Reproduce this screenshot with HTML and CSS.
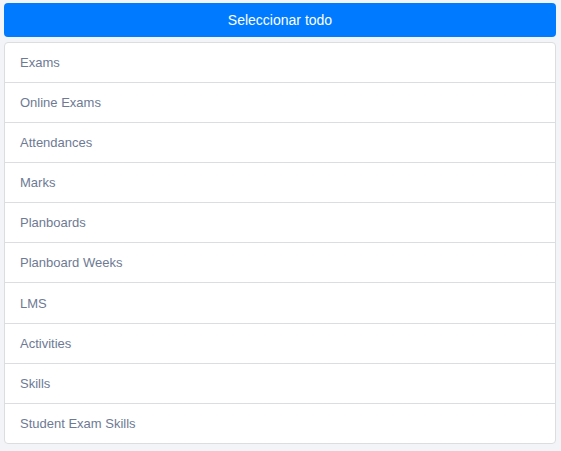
FILE: index.html
```html
<!DOCTYPE html>
<html>
<head>
<meta charset="utf-8">
<link rel="stylesheet" href="styles.css">
</head>
<body>
<div class="wrap">
  <button class="btn-select">Seleccionar todo</button>
  <ul class="list">
    <li class="item">Exams</li>
    <li class="item">Online Exams</li>
    <li class="item">Attendances</li>
    <li class="item">Marks</li>
    <li class="item">Planboards</li>
    <li class="item">Planboard Weeks</li>
    <li class="item">LMS</li>
    <li class="item">Activities</li>
    <li class="item">Skills</li>
    <li class="item">Student Exam Skills</li>
  </ul>
</div>
</body>
</html>
```
FILE: styles.css
```css
html, body {
  margin: 0;
  padding: 0;
  background: #f3f4f7;
  font-family: "Liberation Sans", Arial, sans-serif;
}
.wrap {
  padding: 3px 5px 0 4px;
  display: flex;
  flex-direction: column;
  gap: 5px;
}
.btn-select {
  height: 34px;
  border: none;
  border-radius: 4px;
  background: #007bff;
  color: #fff;
  font-family: inherit;
  font-size: 14px;
  padding: 0;
}
.list {
  list-style: none;
  margin: 0;
  padding: 0;
  background: #fff;
  border: 1px solid #dcdde0;
  border-radius: 4px;
}
.item {
  height: 39px;
  box-sizing: content-box;
  display: flex;
  align-items: center;
  padding: 0 0 0 15px;
  font-size: 13px;
  color: #6e7a94;
  border-top: 1px solid #dcdde0;
}
.item:first-child {
  border-top: none;
  height: 39px;
}
.item:nth-child(7) {
  height: 40px;
}
```
